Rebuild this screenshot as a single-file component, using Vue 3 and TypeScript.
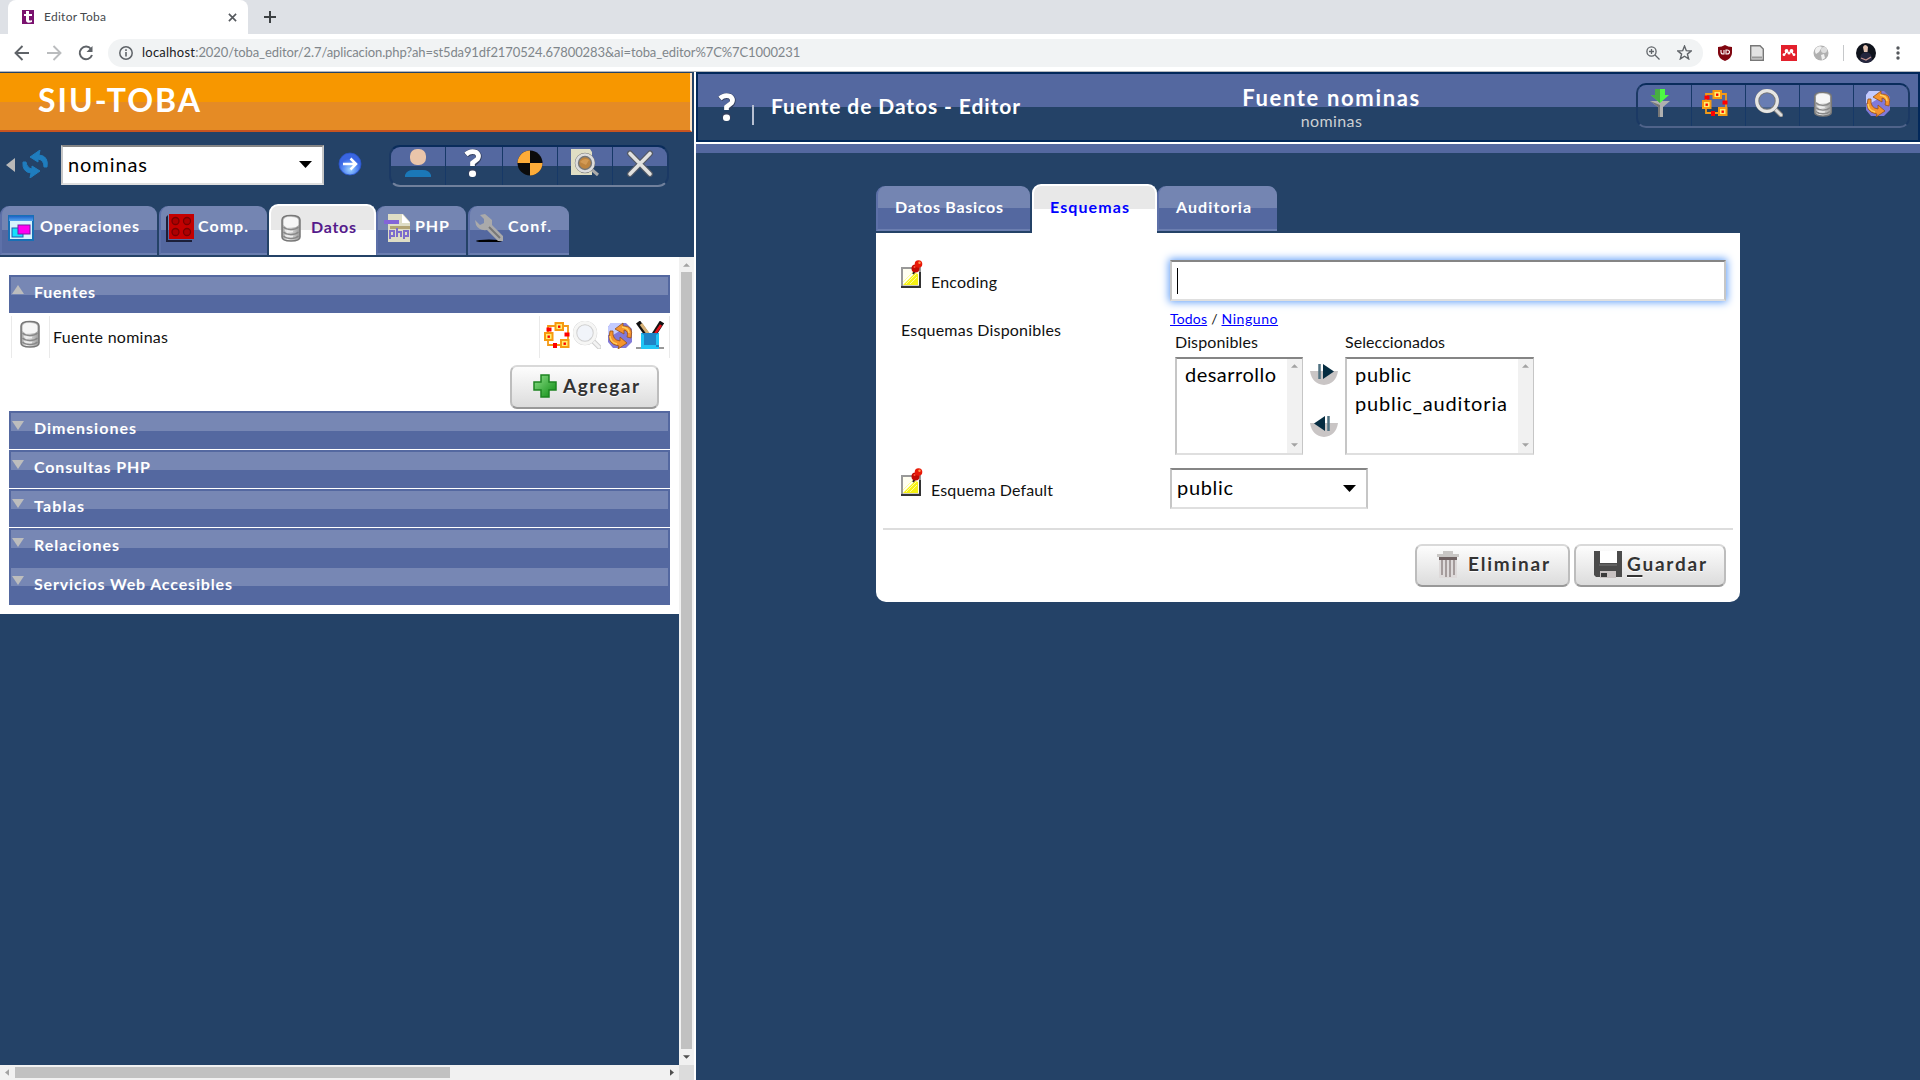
<script setup lang="ts">
import type { Directive } from 'vue'

// Spreads the letters of a label so that it takes the given width in pixels
const vFit: Directive<HTMLElement, number> = {
  mounted(el, binding) {
    const natural = el.getBoundingClientRect().width
    const count = (el.textContent ?? '').length
    if (count > 1) el.style.letterSpacing = `${(binding.value - natural) / (count - 1)}px`
  },
}

interface Section { name: string; width: number }
const sections: Section[] = [
  { name: 'Dimensiones', width: 102 },
  { name: 'Consultas PHP', width: 116 },
  { name: 'Tablas', width: 50 },
  { name: 'Relaciones', width: 85 },
  { name: 'Servicios Web Accesibles', width: 198 },
]
const leftTools = ['person', 'question', 'target', 'inspect', 'close']
const rightTools = ['funnel', 'schema', 'lens', 'db', 'sync']
</script>

<template>
  <div class="window">
    <svg class="defs" width="0" height="0">
      <defs>
        <linearGradient id="metal" x1="0" x2="1"><stop offset="0" stop-color="#999" /><stop offset=".3" stop-color="#eee" /><stop offset="1" stop-color="#999" /></linearGradient>
        <linearGradient id="green" x1="0" y1="0" x2="1" y2="1"><stop offset="0" stop-color="#8fe08a" /><stop offset="1" stop-color="#0a8a10" /></linearGradient>
        <radialGradient id="blue" cy=".75"><stop offset="0" stop-color="#9fd4ff" /><stop offset=".6" stop-color="#5b8ff5" /><stop offset="1" stop-color="#3a66e2" /></radialGradient>
        <linearGradient id="bar" x1="0" x2="0" y1="0" y2="1"><stop offset="0" stop-color="#1c62c4" /><stop offset="1" stop-color="#56a5f0" /></linearGradient>
      </defs>
      <symbol id="db" viewBox="0 0 28 28">
        <path d="M5 6Q5 1.500 14 1.500T23 6V23Q23 27 14 27T5 23Z" fill="url(#metal)" stroke="#777" stroke-width="1.500" />
        <path d="M6.500 6Q7 3 14 3T21.500 6V11Q20 13.500 14 13.500T6.500 11Z" fill="#f6f6f6" />
        <path d="M6.500 13Q9 15.500 14 15.500T21.500 13M6.500 18Q9 20.500 14 20.500T21.500 18M6.500 22Q9 24.500 14 24.500T21.500 22" fill="none" stroke="#888" stroke-width="1.400" />
        <path d="M8 16.500Q11 18 16 17.500M8 21.500Q11 23 16 22.500" fill="none" stroke="#eee" stroke-width="1.300" />
      </symbol>
      <symbol id="schema" viewBox="0 0 28 28">
        <path d="M15 5H5V14V24H22M18 5H25V20" fill="none" stroke="#f39a17" stroke-width="1.800" />
        <g fill="#ffee70" stroke="#f79a10" stroke-width="2"><rect x="12.500" y="2" width="7.500" height="7" /><rect x="2" y="12" width="7.500" height="7" /><rect x="18" y="19" width="7.500" height="7" /></g>
        <g fill="#f00"><rect x="3.500" y="6.500" width="5" height="4" /><rect x="21.500" y="11.500" width="5" height="4" /><rect x="10" y="22" width="4" height="5" /><rect x="15" y="4.500" width="2.400" height="2.400" /><rect x="4.500" y="14.500" width="2.400" height="2.400" /><rect x="20.500" y="21.500" width="2.400" height="2.400" /></g>
      </symbol>
      <symbol id="lens" viewBox="0 0 28 28">
        <path d="M19 19L26 26" stroke="#777" stroke-width="5" stroke-linecap="round" />
        <path d="M19 19L26 26" stroke="#ddd" stroke-width="3" stroke-linecap="round" />
        <circle cx="12" cy="12" r="10" fill="#8fa5d8" fill-opacity=".35" stroke="#777" stroke-width="4.500" />
        <circle cx="12" cy="12" r="10.300" fill="none" stroke="#e6e6e4" stroke-width="3.200" />
      </symbol>
      <symbol id="sync" viewBox="0 0 28 28">
        <path d="M5 2H20L26 8V21L20 27H7L2 21V6Z" fill="#8179d8" />
        <path d="M5 2H17V8L7 14H2V6Z" fill="#c3cbff" />
        <path d="M4 10Q0 23 13 25L12 28L21 22L14 16V20Q6 19 7 10ZM25 17Q28 4 17 5V2L9 8L18 13V9Q23 10 21 16Z" fill="#f5942d" stroke="#94501a" stroke-width=".8" />
        <path d="M4 15Q4 21 11 23M23 12Q23 7 16 6" fill="none" stroke="#ffd05c" stroke-width="1.500" />
      </symbol>
      <symbol id="pencils" viewBox="0 0 28 28">
        <path d="M2 1L12 15" stroke="#111" stroke-width="5" /><path d="M5 3L13 14" stroke="#d5b075" stroke-width="3" />
        <path d="M26 1L17 15" stroke="#111" stroke-width="5" /><path d="M25 4L19 13" stroke="#e5121b" stroke-width="2.500" />
        <path d="M5 12H23V26H5Z" fill="#1f83c6" /><path d="M5 12L8 14V26H5ZM23 12L20 14V26H23ZM5 24H23V28H5Z" fill="#20c5f5" /><path d="M0 27H5M23 27H28" stroke="#333" />
      </symbol>
      <symbol id="person" viewBox="0 0 28 28"><rect x="6" y="0" width="16" height="16" rx="7" fill="#eac5aa" /><path d="M1 28V26Q3 21 9 21H19Q25 21 27 26V28Z" fill="#1b78b8" /></symbol>
      <symbol id="question" viewBox="0 0 28 28">
        <path d="M8 6Q12 2 18 3.500Q22 6 20 10Q18 13 15 14.500V17" fill="none" stroke="#34405f" stroke-width="6" /><circle cx="14.500" cy="24" r="4.500" fill="#34405f" />
        <path d="M8 5.500Q12 1.500 18 3.200Q22 6 19.500 10Q17 12 14.500 14V17" fill="none" stroke="#fff" stroke-width="4.700" /><rect x="11" y="21.500" width="7" height="6.500" rx="3" fill="#fff" />
      </symbol>
      <symbol id="target" viewBox="0 0 28 28"><circle cx="14" cy="14" r="12.500" fill="#0b0b0b" /><path d="M14 14V1.500A12.500 12.500 0 0 0 1.500 14ZM14 14V26.500A12.500 12.500 0 0 0 26.500 14Z" fill="#fdac39" /></symbol>
      <symbol id="inspect" viewBox="0 0 28 28"><path d="M0 0H19L21 3V26H0Z" fill="#e0dec4" /><path d="M20 20L27 26" stroke="#aaa" stroke-width="3" /><circle cx="14" cy="14" r="8" fill="#bd843f" stroke="#777" stroke-width="4.500" /><circle cx="14" cy="14" r="8.500" fill="none" stroke="#ddd" stroke-width="2.600" /><path d="M9 13Q13 8 18 11L15 16Z" fill="#d39a54" /></symbol>
      <symbol id="close" viewBox="0 0 28 28"><path d="M4 4.500L24 25M24 4.500L4 25" stroke="#545a66" stroke-width="6" stroke-linecap="round" /><path d="M4 4.500L24 25M24 4.500L4 25" stroke="#e1e1df" stroke-width="3.600" stroke-linecap="round" /></symbol>
      <symbol id="funnel" viewBox="0 0 28 28"><path d="M4 12L12 18V28H17V18L24 12Z" fill="#b0b0b0" /><path d="M4 12L12 18V28H14V16Z" fill="#777" /><path d="M9 0H19V6H23L14 14L5 6H9Z" fill="#4dfb43" /><path d="M9 0H14V14L5 6H9Z" fill="#47ad43" /></symbol>
      <symbol id="note" viewBox="0 0 22 28">
        <rect x="1" y="8" width="18" height="18.500" fill="#fffef0" stroke="#999" stroke-width="2" /><path d="M2 25L14 13L17 14V25Z" fill="#f6f112" /><path d="M2 22L12 12M5 24L15 14M9 24L16 17" stroke="#fffd9b" />
        <path d="M19 12V27H0" fill="none" stroke="#333" stroke-width="2" /><path d="M12 14L14 11" stroke="#222" stroke-width="2" />
        <circle cx="14.500" cy="8.500" r="4" fill="#c20a03" /><circle cx="17.500" cy="4" r="3.800" fill="#e81808" /><circle cx="18.500" cy="2.700" r="1.200" fill="#ff9a4d" /><circle cx="13.500" cy="7" r="1" fill="#ff563a" />
      </symbol>
      <symbol id="move" viewBox="0 0 28 24"><path d="M0 9H28Q26 22 14 23Q2 22 0 9Z" fill="#c9c5c5" /><path d="M9.500 2V17" stroke="#4f7180" stroke-width="2.500" /><path d="M13 2L24 9.500L13 17Z" fill="#062d42" /></symbol>
    </svg>

    <header class="browser">
      <div class="strip">
        <div class="page-tab">
          <svg class="fav" viewBox="0 0 12 14"><rect width="12" height="14" fill="#7a126f" /><path d="M4 1H7V4H10V6H7V10Q8 11 10 10V12Q4 14 4 10V6H2V4H4Z" fill="#fff" /></svg>
          <span v-fit="62" class="page-title">Editor Toba</span>
          <svg class="tab-x" viewBox="0 0 10 10"><path d="M1 1L9 9M9 1L1 9" stroke="#55595e" stroke-width="1.800" /></svg>
        </div>
        <svg class="new-tab" viewBox="0 0 12 12"><path d="M6 0V12M0 6H12" stroke="#3c4043" stroke-width="2" /></svg>
      </div>
      <div class="nav">
        <svg class="nav-ico" viewBox="0 0 16 16"><path d="M8.500 1L1.500 8L8.500 15M1.500 8H15" fill="none" stroke="#5f6368" stroke-width="1.900" /></svg>
        <svg class="nav-ico" viewBox="0 0 16 16"><path d="M7.500 1L14.500 8L7.500 15M14.500 8H1" fill="none" stroke="#babcbe" stroke-width="1.900" /></svg>
        <svg class="nav-ico" viewBox="0 0 16 16"><path d="M13 4A6.300 6.300 0 1 0 14 10" fill="none" stroke="#5f6368" stroke-width="2" /><path d="M14.500 1V7H8.500Z" fill="#5f6368" /></svg>
        <div class="omnibox">
          <svg class="info" viewBox="0 0 14 14"><circle cx="7" cy="7" r="6.200" fill="none" stroke="#5f6368" stroke-width="1.500" /><path d="M7 6V10.500M7 3.200V5" stroke="#5f6368" stroke-width="1.600" /></svg>
          <span class="url"><b v-fit="53">localhost</b><span v-fit="605">:2020/toba_editor/2.7/aplicacion.php?ah=st5da91df2170524.67800283&amp;ai=toba_editor%7C%7C1000231</span></span>
          <svg class="zoom-ico" viewBox="0 0 14 14"><circle cx="5.500" cy="5.500" r="4.600" fill="none" stroke="#5f6368" stroke-width="1.300" /><path d="M9 9L13.500 13.500M3 5.500H8M5.500 3V8" stroke="#5f6368" stroke-width="1.300" /></svg>
          <svg class="star" viewBox="0 0 14 14"><path d="M7 1L8.700 5.300L13.200 5.600L9.700 8.500L10.900 13L7 10.500L3.100 13L4.300 8.500L.8 5.600L5.300 5.300Z" fill="none" stroke="#5f6368" stroke-width="1.300" /></svg>
        </div>
        <div class="exts">
          <svg width="14" height="16" viewBox="0 0 14 16"><path d="M7 0Q10 2 14 2V8Q14 13 7 16Q0 13 0 8V2Q4 2 7 0Z" fill="#800610" /><path d="M3 5V7Q3 9 5 9H6V5M8 5V9H9Q11.500 9 11.500 7T9 5Z" fill="none" stroke="#fff" stroke-width="1.100" /></svg>
          <svg width="14" height="16" viewBox="0 0 14 16"><path d="M.7.7H10L13.300 4V15.300H.7Z" fill="#e2e2e2" stroke="#777" stroke-width="1.400" /><path d="M2 12.500H12" stroke="#999" stroke-width="2" /></svg>
          <svg width="16" height="16" viewBox="0 0 16 16"><rect width="16" height="16" fill="#e3202c" /><g fill="#fff"><circle cx="5.500" cy="6" r="1.900" /><circle cx="10.500" cy="6" r="1.900" /><circle cx="8" cy="8" r="1.600" /><circle cx="3" cy="9.700" r="1.400" /><circle cx="13" cy="9.700" r="1.400" /></g><path d="M3 9.500Q5 9 5 6M13 9.500Q11 9 11 6" fill="none" stroke="#fff" stroke-width="1.200" /></svg>
          <svg width="16" height="16" viewBox="0 0 16 16"><circle cx="8" cy="8" r="7.500" fill="#b0b0b0" /><path d="M3 3Q6 0 9 2L6 7L3 9Q1 6 3 3ZM8 10L11 9L12 13L9 15Z" fill="#f0f0f0" /><circle cx="11" cy="5" r="3" fill="#ddd" /></svg>
          <i class="sep"></i>
          <svg width="20" height="20" viewBox="0 0 20 20"><circle cx="10" cy="10" r="10" fill="#10131c" /><path d="M7 4Q9 0 12 4L11.500 9H8Z" fill="#e3c3b2" /><path d="M4 18Q3 10 10 9Q17 10 16 18Q10 22 4 18Z" fill="#24263e" /><path d="M5 15L10 17L15 14" fill="none" stroke="#c4928c" stroke-width="1.300" /></svg>
          <svg width="4" height="14" viewBox="0 0 4 14"><g fill="#55585c"><circle cx="2" cy="2" r="1.700" /><circle cx="2" cy="7" r="1.700" /><circle cx="2" cy="12" r="1.700" /></g></svg>
        </div>
      </div>
    </header>

    <main class="frames">
      <aside class="left">
        <div class="brand"><span v-fit="162">SIU-TOBA</span></div>
        <div class="left-bar">
          <svg class="fold" viewBox="0 0 9 14"><path d="M9 0V14L0 7Z" fill="#b9b9b9" /></svg>
          <svg class="reload" viewBox="0 0 26 28"><path d="M1 12Q0 22 9 23L8 28L18 21L10 16V19Q5 18 4 12ZM25 17Q27 6 17 5L18 0L8 7L16 12V9Q22 10 22 17Z" fill="#1f7dbe" stroke="#1f7dbe" /></svg>
          <div class="combo project"><span v-fit="79">nominas</span><svg viewBox="0 0 13 7"><path d="M0 0H13L6.500 7Z" /></svg></div>
          <svg class="go" viewBox="0 0 24 24"><circle cx="12" cy="12" r="11" fill="url(#blue)" stroke="#2a55cc" stroke-width=".8" /><path d="M5 12H18M12.500 6.500L18 12L12.500 17.500" fill="none" stroke="#fff" stroke-width="2.500" /></svg>
          <div class="tools lt">
            <span v-for="t in leftTools" :key="t"><svg><use :href="'#' + t" /></svg></span>
          </div>
        </div>
        <nav class="tabs">
          <span class="tab t1"><svg viewBox="0 0 26 26"><rect x="1" y="1" width="24" height="24" fill="#d5f3fc" stroke="#1870b5" stroke-width="2" /><rect x="1" y="1" width="24" height="5" fill="url(#bar)" /><rect x="4" y="13" width="11" height="9" fill="#16dffc" stroke="#205bb0" /><rect x="10" y="10" width="12" height="9" fill="#ff00f0" stroke="#7a1ba0" /></svg><b v-fit="99">Operaciones</b></span>
          <span class="tab t2"><svg viewBox="0 0 28 28"><path d="M2 1V26H26V28H0V3Z" fill="#1c1f38" /><rect x="3" width="25" height="25" fill="#c40000" /><g fill="#ac0000" stroke="#780000" stroke-width="1.300"><circle cx="9.500" cy="7" r="3.500" /><circle cx="21" cy="7" r="3.500" /><circle cx="9.500" cy="18" r="3.500" /><circle cx="21" cy="18" r="3.500" /></g></svg><b v-fit="50">Comp.</b></span>
          <span class="tab t3 on"><svg><use href="#db" /></svg><b v-fit="45">Datos</b></span>
          <span class="tab t4"><svg viewBox="0 0 28 28"><path d="M4 0H19L26 8V28H4Z" fill="#deddc5" /><path d="M18 0L26 9H18Z" fill="#fff" /><path d="M6 12H26V15H6Z" fill="#b2a474" /><rect y="6" width="15" height="4" fill="#8364d8" /><path d="M6 25V17H10V22H6M13 14V23M13 18H17V23M20 25V17H24V22H20" fill="none" stroke="#7d6dcc" stroke-width="2" /></svg><b v-fit="34">PHP</b></span>
          <span class="tab t5"><svg viewBox="0 0 28 28"><ellipse cx="14" cy="27" rx="13" ry="1.500" fill="#000" /><path d="M5 1L10 0L17 6L17 11L28 22V27H23L12 16Q4 17 1 11L0 6L5 11L9 9V5Z" fill="#aaa" /><path d="M14 13L25 24" stroke="#777" stroke-width="2" /></svg><b v-fit="43">Conf.</b></span>
        </nav>
        <div class="scroller">
          <div class="tree">
            <div class="content">
              <div class="section"><i class="up"></i><b v-fit="61">Fuentes</b></div>
              <div class="source">
                <div class="c1"><svg><use href="#db" /></svg></div>
                <div class="c2"><span v-fit="115">Fuente nominas</span></div>
                <div class="c3"><svg><use href="#schema" /></svg><svg class="faded"><use href="#lens" /></svg><svg><use href="#sync" /></svg><svg><use href="#pencils" /></svg></div>
              </div>
              <div class="add-row"><button class="btn add"><svg viewBox="0 0 24 24"><path d="M8 1H16V8H23V16H16V23H8V16H1V8H8Z" fill="url(#green)" stroke="#1c8420" stroke-width="1.500" /></svg><span v-fit="76">Agregar</span></button></div>
              <div v-for="s in sections" :key="s.name" class="section"><i class="down"></i><b v-fit="s.width">{{ s.name }}</b></div>
            </div>
            <div class="hbar"><svg viewBox="0 0 5 8"><path d="M5 0V8L0 4Z" fill="#a3a3a3" /></svg><i></i><svg viewBox="0 0 5 8"><path d="M0 0V8L5 4Z" fill="#505050" /></svg></div>
          </div>
          <div class="vbar"><svg viewBox="0 0 8 4"><path d="M0 4H8L4 0Z" fill="#a3a3a3" /></svg><i></i><svg viewBox="0 0 8 4"><path d="M0 0H8L4 4Z" fill="#505050" /></svg><em></em></div>
        </div>
      </aside>

      <section class="right">
        <div class="head">
          <svg class="help"><use href="#question" /></svg>
          <i class="tick"></i>
          <b v-fit="249" class="crumb">Fuente de Datos - Editor</b>
          <div class="where"><b v-fit="177">Fuente nominas</b><span v-fit="61">nominas</span></div>
          <div class="tools rt"><span v-for="t in rightTools" :key="t"><svg :class="t"><use :href="'#' + t" /></svg></span></div>
        </div>
        <div class="band"></div>
        <nav class="tabs rtabs">
          <span class="tab r1"><b v-fit="108">Datos Basicos</b></span>
          <span class="tab r2 on"><b v-fit="79">Esquemas</b></span>
          <span class="tab r3"><b v-fit="75">Auditoria</b></span>
        </nav>
        <div class="panel">
          <div class="row enc">
            <div class="label"><svg><use href="#note" /></svg><span v-fit="66">Encoding</span></div>
            <div class="input"><i></i></div>
          </div>
          <div class="row esq">
            <div class="label"><span v-fit="160">Esquemas Disponibles</span></div>
            <div class="pick">
              <div class="links"><a v-fit="37">Todos</a><span>/</span><a v-fit="56">Ninguno</a></div>
              <div class="lists">
                <div class="col"><span v-fit="83">Disponibles</span>
                  <div class="list l1"><div class="opts"><span v-fit="91">desarrollo</span></div><div class="mini"><svg viewBox="0 0 8 4"><path d="M0 4H8L4 0Z" /></svg><svg viewBox="0 0 8 4"><path d="M0 0H8L4 4Z" /></svg></div></div>
                </div>
                <div class="arrows"><svg><use href="#move" /></svg><svg class="back" viewBox="0 0 28 24"><path d="M0 9H28Q26 22 14 23Q2 22 0 9Z" fill="#c9c5c5" /><path d="M18.500 2V17" stroke="#4f7180" stroke-width="2.500" /><path d="M15 2L4 9.500L15 17Z" fill="#062d42" /></svg></div>
                <div class="col"><span v-fit="100">Seleccionados</span>
                  <div class="list l2"><div class="opts"><span v-fit="56">public</span><span v-fit="152">public_auditoria</span></div><div class="mini"><svg viewBox="0 0 8 4"><path d="M0 4H8L4 0Z" /></svg><svg viewBox="0 0 8 4"><path d="M0 0H8L4 4Z" /></svg></div></div>
                </div>
              </div>
            </div>
          </div>
          <div class="row def">
            <div class="label"><svg><use href="#note" /></svg><span v-fit="122">Esquema Default</span></div>
            <div class="combo schema-sel"><span v-fit="56">public</span><svg viewBox="0 0 13 7"><path d="M0 0H13L6.500 7Z" /></svg></div>
          </div>
          <hr />
          <div class="actions">
            <button class="btn del"><svg viewBox="0 0 24 28"><path d="M1 3H23V6H1ZM7 0H17V3H7Z" fill="#c9c7c5" /><path d="M3 6H21V9H3Z" fill="#6f6262" /><path d="M3 9H21V27H3Z" fill="#dedada" /><path d="M6 9V24M10 9V26M14 9V26M18 9V24" stroke="#9c9191" stroke-width="1.700" /></svg><span v-fit="81">Eliminar</span></button>
            <button class="btn save"><svg viewBox="0 0 28 28"><path d="M0 0H28V26H2L0 24Z" fill="#4b4b4b" /><path d="M6 0H23V12H6Z" fill="#fff" /><path d="M5 14H23" stroke="#777" /><path d="M6 20H22V27H6Z" fill="#c8c2c2" /><rect x="7" y="22" width="6" height="4" fill="#3c3c3c" /></svg><span v-fit="79"><u>G</u>uardar</span></button>
          </div>
        </div>
      </section>
    </main>
  </div>
</template>

<style>
body { margin: 0; overflow: hidden; }
</style>

<style scoped>
* { box-sizing: border-box; }
svg { display: block; flex: none; }
.defs { position: absolute; }
.window { width: 1920px; height: 1080px; display: flex; flex-direction: column; font: 16px/20px Lato, "Open Sans", sans-serif; color: #111; background: #244267; white-space: nowrap; overflow: hidden; }
span, b, a { display: inline-block; flex: none; }
.strip { height: 34px; background: #dee1e6; display: flex; align-items: center; }
.page-tab { align-self: stretch; width: 240px; margin-left: 8px; background: #fff; border-radius: 8px 8px 0 0; display: flex; align-items: center; padding-left: 14px; }
.fav { width: 12px; height: 14px; }
.page-title { font-size: 12px; color: #45494d; margin-left: 10px; }
.tab-x { width: 9px; height: 9px; margin: 0 11px 0 auto; }
.new-tab { width: 12px; height: 12px; margin-left: 16px; }
.nav { height: 38px; background: #fff; border-bottom: 1px solid #b4b8bc; display: flex; align-items: center; padding-left: 14px; }
.nav-ico { width: 16px; height: 16px; margin-right: 16px; }
.nav-ico:nth-child(3) { margin-right: 14px; }
.omnibox { width: 1595px; height: 28px; background: #f1f3f4; border-radius: 14px; display: flex; align-items: center; padding: 0 11px; }
.info { width: 14px; height: 14px; margin-right: 9px; }
.url { font-size: 13px; color: #80868b; display: flex; margin-top: -1px; }
.url b { font-weight: 400; color: #202124; }
.zoom-ico { width: 14px; height: 14px; margin-left: auto; }
.star { width: 15px; height: 15px; margin-left: 17px; }
.exts { display: flex; align-items: center; margin-left: 15px; }
.exts svg:nth-child(2) { margin-left: 18px; }
.exts svg:nth-child(3) { margin-left: 17px; }
.exts svg:nth-child(4) { margin-left: 16px; }
.sep { width: 1px; height: 16px; background: #c6c8ca; margin: 0 12px 0 14px; }
.exts svg:last-child { margin-left: 20px; }

.frames { display: flex; height: 1008px; }
.left { width: 696px; border-right: 2px solid #fff; display: flex; flex-direction: column; }
.brand { width: 692px; height: 59px; margin-top: 1px; padding: 9px 0 0 38px; border-right: 2px solid #fde3c5; border-bottom: 2px solid #c9541f; background: linear-gradient(#f79700 29px, #e58b25 29px); color: #fff; font: bold 32px/36px Lato, sans-serif; }
.left-bar { height: 72px; padding: 13px 0 0 6px; display: flex; align-items: flex-start; }
.fold { width: 9px; height: 14px; margin-top: 13px; }
.reload { width: 26px; height: 28px; margin: 5px 13px 0 7px; }
.combo { background: #fff; border: 2px solid; border-color: #858585 #c6c6c6 #dfdfdf #c6c6c6; display: flex; align-items: center; justify-content: space-between; padding: 0 10px 1px 5px; color: #000; font-size: 20px; }
.combo span { margin-top: -2px; }
.combo svg { width: 13px; height: 7px; }
.project { width: 263px; height: 40px; }
.go { width: 24px; height: 24px; margin: 7px 0 0 14px; }
.tools { display: flex; height: 42px; width: 280px; border: 2px solid #092c5b; border-bottom-color: #70809c; border-left-color: #1b3964; border-right-color: #1b3964; border-radius: 11px; background: linear-gradient(#5468a0 19px, #244267 19px); margin-left: 27px; overflow: hidden; }
.tools span { width: 55px; display: flex; justify-content: center; padding-top: 2px; border-right: 1px solid #173967; }
.tools span:last-child { border: 0; width: 57px; }
.tools span:nth-child(2) { width: 57px; }
.tools svg { width: 28px; height: 28px; }
.lt span:nth-child(2) { padding-right: 5px; }
.lt span:nth-child(3) { padding-right: 1px; }
.lt span:nth-child(5) { padding-right: 3px; }
.tabs { display: flex; align-items: flex-end; height: 53px; padding-bottom: 2px; }
.tab { display: flex; height: 49px; border-radius: 9px 9px 0 0; background: linear-gradient(#7485b2 24px, #5468a0 24px); border-bottom: 2px solid #6b7eb0; border-left: 2px solid #5d70a8; color: #fff; margin-right: 2px; }
.tab.on { height: 51px; background: linear-gradient(#e8e8e8 24px, #fff 24px); border: 2px solid #fff; border-bottom: 0; color: #551a8b; }
.tab b { margin-top: 10px; }
.tabs svg { width: 28px; height: 28px; margin-top: 8px; }
.t1 { width: 157px; padding-left: 6px; }
.t1 svg { width: 26px; height: 26px; margin: 9px 6px 0 0; }
.t2 { width: 108px; padding-left: 5px; }
.t2 svg { margin-right: 4px; }
.t3 { width: 107px; padding-left: 6px; margin-right: 0; }
.t3 svg { margin-right: 6px; }
.t3.tab b { margin-top: 11px; }
.t4 { width: 90px; padding-left: 6px; }
.t4 svg { margin-right: 3px; }
.t5 { width: 101px; padding-left: 5px; }
.t5 svg { margin-right: 5px; }
.scroller { display: flex; height: 823px; }
.tree { width: 679px; display: flex; flex-direction: column; }
.content { height: 357px; background: #fff; padding: 18px 9px 0; }
.section { height: 38px; margin-bottom: 1px; border: 2px solid #5468a0; border-bottom: 0; background: linear-gradient(#7787b4 18px, #5468a0 18px); color: #fff; display: flex; padding-left: 1px; }
.section b { margin: 5px 0 0 10px; }
.section:last-child { margin-top: -1px; height: 39px; }
.section:last-child b { margin-top: 6px; }
.section i { width: 0; height: 0; border: 6px solid transparent; margin-top: 8px; }
.section i.up { border-width: 0 6px 9px; border-bottom-color: #bdbdbd; }
.section i.down { border-width: 9px 6px 0; border-top-color: #bdbdbd; }
.source { display: flex; height: 42px; margin: 3px 0 0 2px; border-left: 1px solid #eaeaea; border-right: 1px solid #eaeaea; width: 659px; }
.c1 { width: 38px; border-right: 1px solid #eaeaea; padding: 4px 0 0 4px; }
.c1 svg { width: 28px; height: 28px; }
.c2 { padding: 11px 0 0 3px; width: 489px; }
.c3 { flex: 1; border-left: 1px solid #eaeaea; display: flex; padding: 5px 0 0 3px; }
.c3 svg { width: 28px; height: 28px; }
.c3 svg:nth-child(2) { margin: 0 5px 0 2px; }
.c3 svg:nth-child(4) { margin-left: 2px; }
.faded { opacity: .35; }
.add-row { display: flex; justify-content: flex-end; height: 53px; padding: 7px 11px 0 0; }
.btn { display: flex; align-items: center; height: 44px; border: 2px solid #bdbdbd; border-top-color: #d9d9d9; border-bottom-color: #999; border-radius: 7px; background: linear-gradient(#fdfdfd, #dcdcdc); color: #333; font: bold 19px/24px Lato, sans-serif; padding: 0 0 2px; text-shadow: 0 1px 1px #fff; }
.btn span { margin-top: -1px; }
.btn u { text-decoration-thickness: 2px; text-underline-offset: 4px; text-decoration-skip-ink: none; }
.add { width: 149px; padding-left: 21px; }
.add svg { width: 24px; height: 24px; margin-right: 6px; }
.vbar { width: 15px; background: #f1f1f1; display: flex; flex-direction: column; align-items: center; }
.vbar svg { width: 7px; height: 4px; margin-top: 6px; }
.vbar i { width: 11px; height: 777px; background: #c1c1c1; margin-top: 5px; }
.vbar em { width: 15px; height: 15px; background: #dcdcdc; margin-top: 6px; }
.hbar { height: 15px; background: #f1f1f1; margin-top: auto; display: flex; align-items: center; padding: 0 5px; }
.hbar svg { width: 4px; height: 9px; }
.hbar i { width: 435px; height: 11px; background: #c1c1c1; margin: 0 auto 0 6px; }

.right { width: 1224px; }
.head { height: 70px; border: 2px solid #02285a; background: linear-gradient(#5468a0 33px, #244267 33px); display: flex; color: #fff; }
.help { width: 28px; height: 28px; margin: 19px 0 0 14px; }
.tick { width: 2px; height: 20px; background: #b7c0d2; margin: 31px 17px 0 12px; }
.crumb { font-size: 21px; line-height: 26px; margin: 19px 1px 0 0; }
.where { width: 177px; display: flex; flex-direction: column; align-items: center; margin: 11px 0 0 auto; }
.where b { font-size: 22px; line-height: 26px; }
.where span { color: #ccd0d2; }
.tools.rt { width: 274px; height: 45px; border-radius: 10px; background: linear-gradient(#5468a0 22px, #244267 22px); border-bottom-color: #4f638a; margin: 9px 8px 0 216px; }
.rt span, .rt span:nth-child(2), .rt span:last-child { width: 54px; padding: 4px 7px 0 0; }
.rt span:first-child { padding-right: 4px; }
.rt svg.funnel { margin-left: -6px; }
.rt svg.db { height: 26px; margin-top: 2px; }
.band { height: 11px; background: #5468a0; border-top: 2px solid #fff; }
.rtabs { height: 80px; padding-left: 180px; }
.rtabs .tab { height: 45px; background: linear-gradient(#7485b2 22px, #5468a0 22px); margin-right: 2px; }
.rtabs .tab b { margin-top: 11px; }
.rtabs .tab.on { color: #00f; height: 49px; margin: 0 0 -2px; background: linear-gradient(#e8e8e8 23px, #fff 23px); }
.r1 { width: 154px; padding-left: 17px; }
.r2 { width: 125px; padding-left: 16px; }
.r3 { width: 120px; padding-left: 17px; }
.panel { margin-left: 180px; width: 864px; height: 369px; background: #fff; border-radius: 0 0 10px 10px; padding: 27px 7px 0; }
.row { display: flex; padding-left: 18px; }
.label { width: 269px; display: flex; }
.label svg { width: 22px; height: 28px; margin-right: 8px; }
.enc { height: 53px; }
.enc .label span, .def .label span { margin-top: 12px; }
.input { width: 556px; height: 41px; border: 2px solid; border-color: #858585 #c6c6c6 #dfdfdf #c6c6c6; box-shadow: 0 0 8px 1px #5c9cf8; padding: 6px 5px; }
.input i { display: block; width: 1px; height: 26px; background: #000; }
.esq { height: 155px; }
.esq .label { padding-top: 7px; }
.links { display: flex; font-size: 14px; line-height: 18px; gap: 4px; margin: -3px 0 1px; }
.links a { color: #00f; text-decoration: underline; }
.lists { display: flex; margin-left: 5px; }
.col { padding-top: 3px; }
.col > span { display: table; line-height: 20px; }
.list { height: 98px; margin-top: 5px; border: 2px solid; border-color: #858585 #c6c6c6 #dfdfdf #c6c6c6; border-right-width: 1px; display: flex; }
.l1 { width: 128px; }
.l2 { width: 189px; }
.opts { flex: 1; min-width: 0; font-size: 20px; line-height: 29px; padding: 1px 0 0 8px; display: flex; flex-direction: column; align-items: flex-start; color: #000; }
.mini { width: 15px; flex: none; background: #f1f1f1; display: flex; flex-direction: column; justify-content: space-between; align-items: center; padding: 5px 0 6px; }
.mini svg { width: 7px; height: 4px; fill: #a3a3a3; }
.arrows { width: 42px; padding: 33px 7px 0; }
.arrows svg { width: 28px; height: 24px; margin-bottom: 28px; }
.def { height: 60px; }
.schema-sel { width: 198px; height: 41px; }
hr { height: 2px; border: 0; background: #ddd; margin: 0 0 14px; }
.actions { display: flex; justify-content: flex-end; gap: 4px; padding-right: 7px; }
.actions .btn { height: 43px; }
.del { width: 155px; padding-left: 19px; }
.del svg { width: 24px; height: 28px; margin-right: 8px; }
.save { width: 152px; padding-left: 18px; }
.save svg { width: 28px; height: 28px; margin-right: 5px; }
</style>
